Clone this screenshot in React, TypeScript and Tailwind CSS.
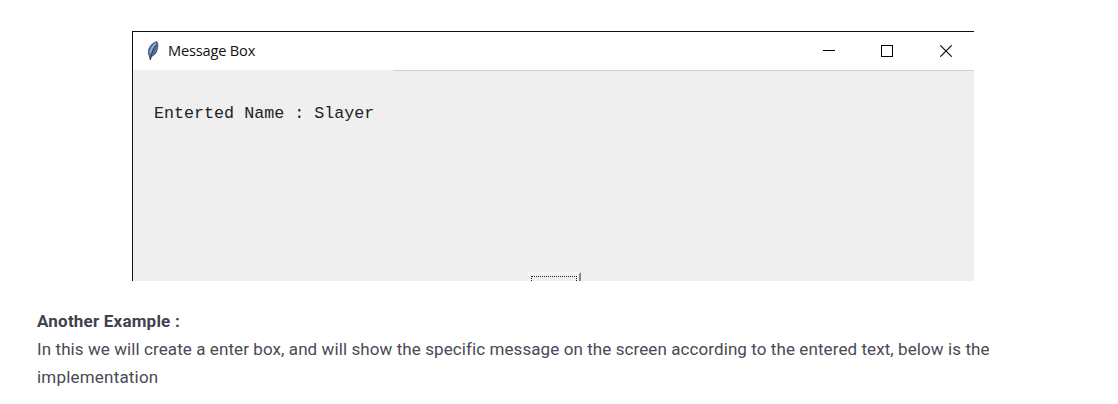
function FeatherIcon() {
  return (
    <svg width="14" height="20" viewBox="0 0 14 20" className="shrink-0">
      <path d="M11 .7C7.8 1 4 4.3 2.9 8C2 10.8 2.2 13.3 3.4 15L4.2 18.8L5.6 15.4C8.2 14.4 10 12.6 11 9.4C11.9 6.5 12.4 3.4 11 .7Z" fill="#52739f" stroke="#3d4859" strokeWidth=".8" />
      <path d="M9.8 2.6C7 4.7 5 8.2 4.2 12.3" fill="none" stroke="#9dbde5" strokeWidth="1.4" />
      <path d="M10.4 3.6C7.8 7.3 5.8 11.5 4.2 18.6" fill="none" stroke="#2c3444" strokeWidth=".9" />
    </svg>
  );
}

function TitleBar() {
  return (
    <header className="flex h-[38px] items-center bg-white pl-[13px] pr-[22px]">
      <FeatherIcon />
      <span className="mb-[2px] ml-2 font-['Open_Sans','Noto_Sans',sans-serif] text-[14.6px] leading-5 tracking-[-0.18px] text-[#111]">Message Box</span>
      <div className="ml-auto flex items-center gap-[46px]">
        <svg width="12" height="12" viewBox="0 0 12 12" shapeRendering="crispEdges">
          <path d="M0 5.5H12" stroke="black" />
        </svg>
        <svg width="12" height="12" viewBox="0 0 12 12" shapeRendering="crispEdges">
          <rect x=".5" y=".5" width="11" height="11" fill="none" stroke="black" />
        </svg>
        <svg width="12" height="12" viewBox="0 0 12 12" className="ml-px">
          <path d="M.3 .3L11.7 11.7M11.7 .3L.3 11.7" stroke="black" strokeWidth="1.1" />
        </svg>
      </div>
    </header>
  );
}

function MessageWindow() {
  return (
    <section className="ml-[132px] flex h-[250px] w-[842px] flex-col overflow-hidden border-l border-t border-[#111] bg-[#efefef]">
      <TitleBar />
      <div className="ml-[260px] h-px shrink-0 bg-[#cfcfcf]" />
      <div className="flex grow flex-col justify-between">
        <p className="ml-[21px] mt-[33px] font-['Liberation_Mono',monospace] text-[16.7px] leading-5 text-[#222]">Enterted Name : Slayer</p>
        <div className="ml-[395px] h-[9px] w-[53px] border-l-2 border-r-2 border-t-2 border-l-[#f5f5f5] border-r-[#888] border-t-[#f5f5f5] pl-px pr-[2px] pt-[2px]">
          <div className="h-full border-x border-t border-dotted border-[#222]" />
        </div>
      </div>
    </section>
  );
}

export default function App() {
  return (
    <main className="h-[404px] w-[1118px] overflow-hidden bg-white pt-[31px]">
      <MessageWindow />
      <article className="ml-[37px] mt-[26px] font-['Roboto',sans-serif] text-[17px] leading-7 text-[#484a55]">
        <h2 className="w-fit font-bold tracking-[0.2px] text-[#40424e]">Another Example :</h2>
        <p className="w-fit whitespace-nowrap tracking-[0.086px]">In this we will create a enter box, and will show the specific message on the screen according to the entered text, below is the</p>
        <p className="w-fit tracking-[0.2px]">implementation</p>
      </article>
    </main>
  );
}
